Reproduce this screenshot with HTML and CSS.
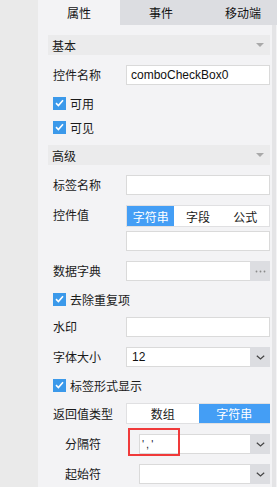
FILE: index.html
```html
<!DOCTYPE html>
<html lang="zh-CN">
<head>
  <meta charset="UTF-8" />
  <title>属性面板</title>
  <link rel="stylesheet" href="styles.css">
</head>
<body>
  <div class="app">
    <div class="gutter"></div>
    <div class="panel">
      <div class="tabs">
        <div class="tab active">属性</div>
        <div class="tab">事件</div>
        <div class="tab">移动端</div>
      </div>

      <div class="body">
        <div class="form">
          <div class="group">基本<span class="caret"></span></div>

          <div class="row">
            <span class="label">控件名称</span>
            <div class="input">comboCheckBox0</div>
          </div>
          <div class="check first"><span class="box"><svg width="9" height="8" viewBox="0 0 9 8"><path d="M1 4.2 L3.4 6.5 L8 1.2" fill="none" stroke="#fff" stroke-width="1.6"/></svg></span>可用</div>
          <div class="check"><span class="box"><svg width="9" height="8" viewBox="0 0 9 8"><path d="M1 4.2 L3.4 6.5 L8 1.2" fill="none" stroke="#fff" stroke-width="1.6"/></svg></span>可见</div>

          <div class="group after-check">高级<span class="caret"></span></div>

          <div class="row">
            <span class="label">标签名称</span>
            <div class="input"></div>
          </div>
          <div class="row top">
            <span class="label">控件值</span>
            <div class="seg three">
              <span class="on">字符串</span>
              <span>字段</span>
              <span>公式</span>
            </div>
          </div>
          <div class="row tight">
            <span class="label"></span>
            <div class="input"></div>
          </div>
          <div class="row">
            <span class="label">数据字典</span>
            <div class="input with-btn">
              <span class="field"></span>
              <span class="btn"><svg width="11" height="3" viewBox="0 0 11 3"><circle cx="1.5" cy="1.5" r="0.9" fill="#8a8a8a"/><circle cx="5.5" cy="1.5" r="0.9" fill="#8a8a8a"/><circle cx="9.5" cy="1.5" r="0.9" fill="#8a8a8a"/></svg></span>
            </div>
          </div>
          <div class="check first"><span class="box"><svg width="9" height="8" viewBox="0 0 9 8"><path d="M1 4.2 L3.4 6.5 L8 1.2" fill="none" stroke="#fff" stroke-width="1.6"/></svg></span>去除重复项</div>
          <div class="row after-check">
            <span class="label">水印</span>
            <div class="input"></div>
          </div>
          <div class="row">
            <span class="label">字体大小</span>
            <div class="input with-btn">
              <span class="field num">12</span>
              <span class="btn"><svg width="9" height="5" viewBox="0 0 9 5"><path d="M0.8 0.8 L4.5 4 L8.2 0.8" fill="none" stroke="#444" stroke-width="1.2"/></svg></span>
            </div>
          </div>
          <div class="check first"><span class="box"><svg width="9" height="8" viewBox="0 0 9 8"><path d="M1 4.2 L3.4 6.5 L8 1.2" fill="none" stroke="#fff" stroke-width="1.6"/></svg></span>标签形式显示</div>
          <div class="row after-check seg-row">
            <span class="label">返回值类型</span>
            <div class="seg two">
              <span>数组</span>
              <span class="on">字符串</span>
            </div>
          </div>
          <div class="row sub marked">
            <span class="label">分隔符</span>
            <div class="input with-btn">
              <span class="field sep">','</span>
              <span class="btn"><svg width="9" height="5" viewBox="0 0 9 5"><path d="M0.8 0.8 L4.5 4 L8.2 0.8" fill="none" stroke="#444" stroke-width="1.2"/></svg></span>
            </div>
            <span class="highlight"></span>
          </div>
          <div class="row sub">
            <span class="label">起始符</span>
            <div class="input with-btn">
              <span class="field"></span>
              <span class="btn"><svg width="9" height="5" viewBox="0 0 9 5"><path d="M0.8 0.8 L4.5 4 L8.2 0.8" fill="none" stroke="#444" stroke-width="1.2"/></svg></span>
            </div>
          </div>
        </div>
        <div class="scrollbar"></div>
      </div>
    </div>
  </div>
</body>
</html>
```

FILE: styles.css
```css
body {
  margin: 0;
  background: #f3f3f5;
  font-family: "Noto Sans CJK SC", "Liberation Sans", sans-serif;
  font-size: 12px;
  color: #1a1a1a;
}

.app {
  display: flex;
  width: 277px;
  height: 487px;
  overflow: hidden;
}

.gutter {
  width: 38px;
  flex: none;
  background: #eaeaea;
}

.panel {
  flex: 1;
  display: flex;
  flex-direction: column;
  min-width: 0;
}

.tabs {
  display: flex;
  height: 25px;
  flex: none;
  overflow: hidden;
}

.tab {
  width: 82px;
  flex: none;
  display: flex;
  align-items: center;
  justify-content: center;
  background: #dcdde1;
  font-size: 12px;
  color: #111;
}

.tab.active {
  background: #f3f3f5;
}

.body {
  flex: 1;
  display: flex;
}

.form {
  width: 222px;
  padding: 10px 0 0 10px;
}

.scrollbar {
  width: 4px;
  margin-left: 2px;
  background: #e4e4e6;
}

.group {
  display: flex;
  align-items: center;
  height: 20px;
  padding-left: 4px;
  background: #ebebec;
}

.caret {
  margin-left: auto;
  margin-right: 6px;
  border-left: 4px solid transparent;
  border-right: 4px solid transparent;
  border-top: 4px solid #a9a9a9;
}

.row {
  display: flex;
  align-items: center;
  margin-top: 10px;
  position: relative;
}

.row.top {
  align-items: flex-start;
}

.row.tight {
  margin-top: 4px;
}

.row.after-check,
.group.after-check {
  margin-top: 6px;
}

.row.seg-row {
  margin-top: 6px;
}

.label {
  width: 73px;
  flex: none;
  padding-left: 5px;
  line-height: 16px;
}

.row.top .label {
  padding-top: 2px;
}

.row.sub .label {
  width: 74px;
  padding-left: 17px;
}

.input {
  flex: 1;
  height: 20px;
  box-sizing: border-box;
  border: 1px solid #dadada;
  background: #fff;
  padding-left: 4px;
  font-family: "Liberation Sans", sans-serif;
  font-size: 12px;
  line-height: 18px;
  color: #111;
}

.input.with-btn {
  display: flex;
  padding-left: 0;
  border-right: none;
}

.field {
  flex: 1;
  padding-left: 5px;
}

.field.num {
  padding-left: 5px;
}

.field.sep {
  padding-left: 2px;
  letter-spacing: 2px;
  font-size: 11px;
  color: #223;
}

.btn {
  width: 20px;
  margin: -1px 0;
  display: flex;
  align-items: center;
  justify-content: center;
  background: #dcdde1;
}

.check {
  display: flex;
  align-items: center;
  height: 24px;
  padding-left: 5px;
}

.check.first {
  margin-top: 6px;
}

.box {
  width: 13px;
  height: 13px;
  margin-right: 4px;
  background: #3b99ea;
  display: flex;
  align-items: center;
  justify-content: center;
}

.seg {
  flex: 1;
  display: flex;
  height: 22px;
  box-sizing: border-box;
  border: 1px solid #e0e0e2;
  background: #fff;
}

.seg span {
  flex: 1;
  display: flex;
  align-items: center;
  justify-content: center;
  font-size: 12px;
}

.seg span.on {
  background: #449ef5;
  color: #fff;
}

.seg.two {
  height: 21px;
  border-right: none;
}

.highlight {
  position: absolute;
  left: 80px;
  top: -6px;
  width: 52px;
  height: 28px;
  box-sizing: border-box;
  border: 2px solid #f03a3a;
}
```
